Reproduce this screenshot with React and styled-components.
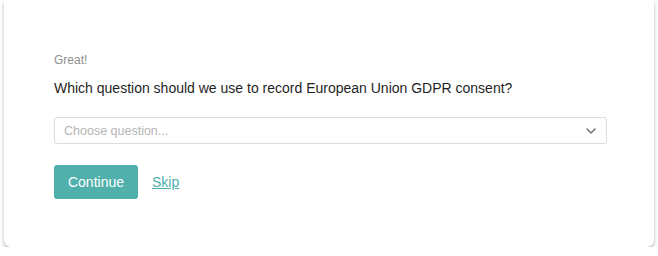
import styled, { createGlobalStyle } from "styled-components";

const GlobalStyle = createGlobalStyle`
  body {
    margin: 0;
    background: #ffffff;
    font-family: "Liberation Sans", Arial, sans-serif;
  }
`;

const Card = styled.div`
  box-sizing: border-box;
  margin: 0 4px 0 4px;
  height: 247px;
  padding: 51px 50px 0 50px;
  background: #fff;
  border-radius: 0 0 7px 7px;
  box-shadow: 0 3px 4px rgba(0, 0, 0, 0.25), 0 0 1px rgba(0, 0, 0, 0.15);
`;

const Intro = styled.p`
  margin: 0 0 9px;
  font-size: 12px;
  line-height: 18px;
  color: #8f8f8f;
`;

const Question = styled.h2`
  margin: 0 0 19px;
  font-size: 14px;
  font-weight: 400;
  line-height: 20px;
  color: #1f1f1f;
`;

const SelectBox = styled.div`
  box-sizing: border-box;
  width: 553px;
  height: 27px;
  display: flex;
  align-items: center;
  justify-content: space-between;
  padding: 0 9px 0 9px;
  border: 1px solid #dcdcdc;
  border-radius: 3px;
  font-size: 12.5px;
  color: #b5b5b5;
`;

const Actions = styled.div`
  display: flex;
  align-items: center;
  gap: 14px;
  margin-top: 21px;
`;

const Button = styled.button`
  box-sizing: border-box;
  height: 34px;
  width: 84px;
  border: none;
  border-radius: 3px;
  background: #4fb0ac;
  color: #fff;
  font-family: inherit;
  font-size: 14px;
  cursor: pointer;
`;

const SkipLink = styled.a`
  color: #4fb0ac;
  font-size: 14px;
  text-decoration: underline;
  cursor: pointer;
`;

const Chevron = () => (
  <svg width="12" height="12" viewBox="0 0 12 12" fill="none">
    <path d="M2 4l4 4 4-4" stroke="#777" strokeWidth="1.6" strokeLinecap="round" strokeLinejoin="round" />
  </svg>
);

export default function App() {
  return (
    <>
      <GlobalStyle />
      <Card>
        <Intro>Great!</Intro>
        <Question>Which question should we use to record European Union GDPR consent?</Question>
        <SelectBox>
          <span>Choose question...</span>
          <Chevron />
        </SelectBox>
        <Actions>
          <Button>Continue</Button>
          <SkipLink>Skip</SkipLink>
        </Actions>
      </Card>
    </>
  );
}
